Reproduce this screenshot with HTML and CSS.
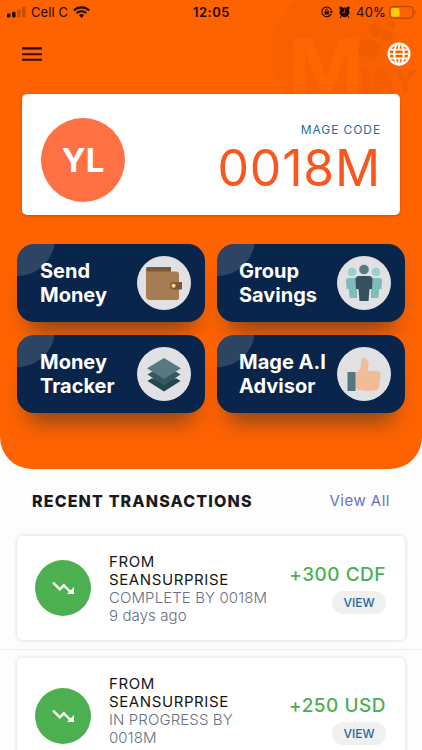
FILE: index.html
```html
<!DOCTYPE html>
<html lang="en">
<head>
    <meta charset="UTF-8">
    <meta name="viewport" content="width=device-width, initial-scale=1.0">
    <title>Mage</title>
    <link rel="stylesheet" href="styles.css">
</head>
<body>
    <section class="hero">
        <svg class="watermark" width="160" height="110" viewBox="0 0 160 110">
            <circle cx="73" cy="52" r="64" fill="#f86000"/>
            <text class="mark-m" x="26" y="93" textLength="76" lengthAdjust="spacingAndGlyphs">M</text>
            <g fill="#f05d00">
                <rect x="97" y="40" width="20" height="18" rx="6" transform="rotate(25 107 49)"/>
                <rect x="107" y="24" width="12" height="12" rx="4" transform="rotate(25 113 30)"/>
                <rect x="120" y="31" width="10" height="10" rx="3" transform="rotate(20 125 36)"/>
                <circle cx="130" cy="24" r="3.5"/>
            </g>
            <text class="mark-ay" x="99" y="93" textLength="56" lengthAdjust="spacingAndGlyphs">IAY</text>
        </svg>

        <div class="status">
            <div class="status-left">
                <svg width="19" height="11" viewBox="0 0 19 11">
                    <rect x="0" y="6.5" width="3.4" height="4" rx="1"/>
                    <rect x="5.1" y="4.7" width="3.4" height="5.8" rx="1"/>
                    <rect x="10.2" y="2.4" width="3.4" height="8.1" rx="1" opacity=".25"/>
                    <rect x="15.2" y="0" width="3.4" height="10.5" rx="1" opacity=".25"/>
                </svg>
                <span class="carrier">Cell C</span>
                <svg width="17" height="12" viewBox="0 0 17 12" fill="none" stroke="#1c0a00" stroke-width="2.1">
                    <path d="M.9 4.5a10.8 10.8 0 0 1 15.2 0M3.7 7.3a6.8 6.8 0 0 1 9.6 0"/>
                    <path d="M6 9.2a3.6 3.6 0 0 1 5 0L8.500 11.900z" fill="#1c0a00" stroke="none"/>
                </svg>
            </div>
            <span class="clock">12:05</span>
            <div class="status-right">
                <svg width="12" height="12" viewBox="0 0 12 12">
                    <path d="M10.300 7.800A4.900 4.900 0 1 1 10.400 4.200" fill="none" stroke="#1c0a00" stroke-width="1.1"/>
                    <path d="M8.700 5h3.300l-1.600 2.400z"/>
                    <rect x="3.600" y="5.200" width="4.400" height="3.400" rx=".5"/>
                    <path d="M4.500 5.500V4.400a1.300 1.300 0 0 1 2.600 0v1.100" fill="none" stroke="#1c0a00" stroke-width=".9"/>
                </svg>
                <svg class="alarm" width="11" height="12" viewBox="0 0 11 12">
                    <circle cx="5.500" cy="6.300" r="4.900"/>
                    <circle cx="1.900" cy="2.100" r="1.600"/>
                    <circle cx="9.100" cy="2.100" r="1.600"/>
                    <path d="M2 10.500l-.8 1M9 10.500l.8 1" stroke="#1c0a00" stroke-width="1.300"/>
                    <path d="M5.600 3.400v3.200H3.200" fill="none" stroke="#fd6200" stroke-width=".7"/>
                </svg>
                <span class="percent">40%</span>
                <svg width="27" height="13" viewBox="0 0 27 13">
                    <rect x=".6" y=".6" width="23.400" height="11.600" rx="3.200" fill="none" stroke="#a94300" stroke-width="1"/>
                    <rect x="2" y="2" width="8.500" height="8.800" rx="1.500" fill="#ffcc02"/>
                    <path d="M25.300 4.500c1.600.6 1.600 3.200 0 3.800z" fill="#a94300"/>
                </svg>
            </div>
        </div>

        <div class="toolbar">
            <svg width="20" height="15" viewBox="0 0 20 15">
                <path d="M0 1.400h20M0 7.200h20M0 12.800h20" stroke="#2b0e06" stroke-width="2.100"/>
            </svg>
            <svg width="24" height="24" viewBox="0 0 24 24" fill="none" stroke="#fff" stroke-width="2">
                <circle cx="12" cy="12" r="10.400" stroke-width="2.200"/>
                <ellipse cx="12" cy="12" rx="4.800" ry="10.400"/>
                <path d="M12 1.500v6M12 16.400v6M1.500 12h21M3 7.600h18M3 16.400h18" stroke-width="1.700"/>
            </svg>
        </div>

        <div class="code-card">
            <div class="avatar">YL</div>
            <div class="code">
                <div class="code-label">MAGE CODE</div>
                <div class="code-value">0018M</div>
            </div>
        </div>

        <div class="tiles">
            <div class="tile">
                <span>Send<br>Money</span>
                <svg class="tile-icon" width="54" height="54" viewBox="0 0 54 54">
                    <path d="M9 14v-1q0-2 2-2h23v7H9z" fill="#7d5836"/>
                    <path d="M9 13q0 2.500 3 2.500h27q3 0 3 2.500v24q0 2-2 2H13q-4 0-4-4z" fill="#a67c52"/>
                    <path d="M37 26h8v7.500h-8a3.700 3.700 0 0 1 0-7.500z" fill="#7d5836"/>
                    <circle cx="36.600" cy="29.700" r="2" fill="#ffe092"/>
                </svg>
            </div>
            <div class="tile">
                <span>Group<br>Savings</span>
                <svg class="tile-icon" width="54" height="54" viewBox="0 0 54 54">
                    <g fill="#7fbcb9">
                        <circle cx="15" cy="16" r="4.300" fill="#99d0cd"/>
                        <circle cx="39" cy="16" r="4.300" fill="#99d0cd"/>
                        <path d="M12 22h8v20h-7.300l-1-9H9.500L9 25q0-3 3-3zM34 22h8q3 0 3 3l-.5 8h-2.200l-1 9H34z"/>
                    </g>
                    <path d="M22 20h10q3.500 0 3.500 3.500L35 33h-2.500l-1 12h-9l-1-12H19l-.5-9.500Q18.500 20 22 20z" fill="#344f5d"/>
                    <circle cx="27" cy="13.500" r="4.800" fill="#587980"/>
                </svg>
            </div>
            <div class="tile">
                <span>Money<br>Tracker</span>
                <svg class="tile-icon" width="54" height="54" viewBox="0 0 54 54">
                    <path d="M10.500 34l4-2.500h25l4 2.500L27 44.500z" fill="#24454c"/>
                    <path d="M10.500 27.500l4-2.500h25l4 2.500L27 38.500z" fill="#35585f"/>
                    <path d="M27 11l17 10.300L27 32 10 21.300z" fill="#587980"/>
                </svg>
            </div>
            <div class="tile">
                <span>Mage A.I<br>Advisor</span>
                <svg class="tile-icon" width="54" height="54" viewBox="0 0 54 54">
                    <path d="M18 26c4-1 6-5 6-9 0-3 0-6 3-6 3.500 0 5 4 4.500 7.500l-1 5.500H40q4 0 3.500 4l-1.300 11.500q-.4 3.500-4 4C32 44.500 24 44 18 41.500z" fill="#f0bd98"/>
                    <rect x="10.500" y="25" width="8" height="19" fill="#547680"/>
                </svg>
            </div>
        </div>
    </section>

    <section class="transactions">
        <div class="section-head">
            <h2>RECENT TRANSACTIONS</h2>
            <a class="view-all">View All</a>
        </div>

        <div class="row">
            <div class="transaction">
                <div class="trend">
                    <svg width="24" height="24" viewBox="0 0 24 24">
                        <path d="M2 6.500l6.800 6.800 4-4 6.200 6.200" fill="none" stroke="#fff" stroke-width="2.400"/>
                        <path d="M23 11v7h-7z" fill="#fff"/>
                    </svg>
                </div>
                <div class="details">
                    <div class="from">FROM</div>
                    <div class="from">SEANSURPRISE</div>
                    <div class="state">COMPLETE BY 0018M</div>
                    <div class="state">9 days ago</div>
                </div>
                <div class="amount-col">
                    <div class="amount">+300 CDF</div>
                    <a class="view">VIEW</a>
                </div>
            </div>
        </div>

        <div class="row">
            <div class="transaction pending">
                <div class="trend">
                    <svg width="24" height="24" viewBox="0 0 24 24">
                        <path d="M2 6.500l6.800 6.800 4-4 6.200 6.200" fill="none" stroke="#fff" stroke-width="2.400"/>
                        <path d="M23 11v7h-7z" fill="#fff"/>
                    </svg>
                </div>
                <div class="details">
                    <div class="from">FROM</div>
                    <div class="from">SEANSURPRISE</div>
                    <div class="state">IN PROGRESS BY</div>
                    <div class="state">0018M</div>
                    <div class="state">9 days ago</div>
                </div>
                <div class="amount-col">
                    <div class="amount">+250 USD</div>
                    <a class="view">VIEW</a>
                </div>
            </div>
        </div>
    </section>
</body>
</html>
```
FILE: styles.css
```css
* {
    box-sizing: border-box;
}

body {
    margin: 0;
    height: 750px;
    overflow: hidden;
    background-color: #fdfdfd;
    font-family: Inter, "Liberation Sans", sans-serif;
}

svg {
    display: block;
    flex-shrink: 0;
}

.hero {
    position: relative;
    height: 469px;
    background-color: #ff6300;
    border-radius: 0 0 32px 32px;
    overflow: hidden;
}

.watermark {
    position: absolute;
    top: 0;
    left: 262px;
}

.mark-m {
    font-size: 74px;
    font-weight: 700;
    fill: #ff6500;
}

.mark-ay {
    font-size: 32px;
    font-weight: 800;
    fill: #f35e00;
}

/* status bar */
.status {
    position: relative;
    display: grid;
    grid-template-columns: 1fr auto 1fr;
    align-items: center;
    height: 24px;
    padding: 0 6px 0 7px;
    color: #1c0a00;
    fill: #1c0a00;
    font-size: 13px;
}

.status-left,
.status-right {
    display: flex;
    align-items: center;
}

.status-right {
    justify-content: flex-end;
}

.carrier {
    margin: 0 5px 0 5px;
    letter-spacing: 0.1px;
}

.clock {
    font-weight: 600;
    letter-spacing: 0.5px;
}

.alarm {
    margin: 0 6px 0 6px;
}

.percent {
    margin-right: 3px;
    letter-spacing: 0.2px;
}

.toolbar {
    position: relative;
    display: flex;
    justify-content: space-between;
    align-items: center;
    height: 60px;
    padding: 0 11px 0 22px;
}

.code-card {
    position: relative;
    display: flex;
    justify-content: space-between;
    height: 121px;
    margin: 10px 22px 0;
    padding: 24px 19px 0 19px;
    background-color: #fff;
    border-radius: 5px;
    box-shadow: 0 1px 3px rgba(0, 0, 0, 0.2);
}

.avatar {
    width: 84px;
    height: 84px;
    border-radius: 50%;
    background-color: #ff7043;
    color: #fff;
    font-size: 33px;
    font-weight: 700;
    line-height: 85px;
    text-align: center;
}

.code {
    text-align: right;
}

.code-label {
    margin-top: 4px;
    color: #2b6ca3;
    font-size: 12px;
    line-height: 16px;
    letter-spacing: 0.9px;
}

.code-value {
    color: #f9571f;
    font-size: 50px;
    line-height: 60px;
    letter-spacing: 0.8px;
}

/* menu tiles */
.tiles {
    display: grid;
    grid-template-columns: 188px 188px;
    gap: 13px 12px;
    padding: 29px 17px 0;
}

.tile {
    position: relative;
    display: flex;
    align-items: center;
    justify-content: space-between;
    height: 78px;
    padding: 0 14px 0 23px;
    border-radius: 17px;
    background: radial-gradient(circle at 0 -6px, #2d4563 37.5px, #09254b 38.5px);
    box-shadow: 0 20px 22px -12px rgba(60, 50, 45, 0.65);
    color: #fff;
    font-size: 20px;
    font-weight: 700;
    line-height: 24px;
    white-space: nowrap;
}

.tile:nth-child(even) {
    padding-left: 22px;
}

.tile-icon {
    border-radius: 50%;
    background-color: #e1e1e3;
}

/* transactions */
.section-head {
    display: flex;
    justify-content: space-between;
    align-items: center;
    height: 67px;
    padding: 0 32px 4px;
}

.section-head h2 {
    margin: 0;
    color: #1a1a1c;
    font-size: 16px;
    font-weight: 800;
    letter-spacing: 1.15px;
}

.view-all {
    color: #6870ce;
    font-size: 15px;
    letter-spacing: 0.5px;
}

.row {
    padding: 0 17px 9px;
    border-bottom: 1px solid #ededed;
}

.row + .row {
    padding-top: 8px;
}

.transaction {
    display: flex;
    height: 104px;
    padding: 17px 19px 0 18px;
    background-color: #fff;
    border-radius: 5px;
    box-shadow: 0 0 4px rgba(0, 0, 0, 0.16);
}

.pending {
    height: 123px;
}

.trend {
    display: flex;
    align-items: center;
    justify-content: center;
    width: 56px;
    height: 56px;
    margin: 7px 18px 0 0;
    border-radius: 50%;
    background-color: #4caf50;
}

.pending .trend {
    margin-top: 13px;
}

.details {
    width: 160px;
    font-size: 15px;
    line-height: 18px;
    white-space: nowrap;
}

.from {
    color: #161616;
    letter-spacing: 0.6px;
}

.state {
    color: #667085;
    font-weight: 300;
    letter-spacing: 0.1px;
}

.amount-col {
    display: flex;
    flex-direction: column;
    align-items: flex-end;
    flex: 1;
    padding-top: 10px;
    white-space: nowrap;
}

.pending .amount-col {
    padding-top: 19px;
}

.amount {
    color: #4caf50;
    font-size: 19px;
    font-weight: 500;
    line-height: 24px;
    letter-spacing: 0.5px;
}

.view {
    width: 54px;
    height: 23px;
    margin-top: 4px;
    border-radius: 12px;
    background-color: #f0f0f0;
    color: #2468a2;
    font-size: 12px;
    font-weight: 500;
    line-height: 23px;
    text-align: center;
}
```
